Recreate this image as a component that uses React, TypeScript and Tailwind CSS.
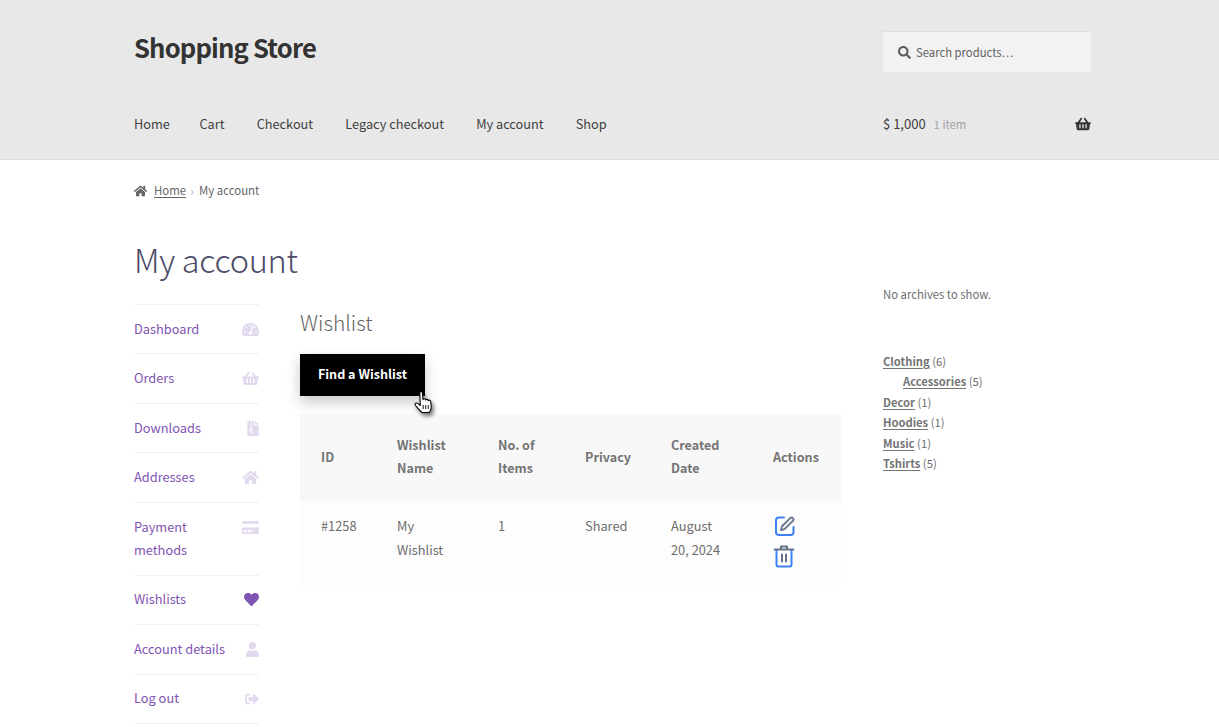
import React from "react";
import {
  FaTachometerAlt,
  FaShoppingBasket,
  FaFileArchive,
  FaHome,
  FaCreditCard,
  FaHeart,
  FaUser,
  FaSignOutAlt,
  FaSearch,
} from "react-icons/fa";

const font = { fontFamily: '"Noto Sans CJK SC", "Noto Sans", sans-serif' };

const navItems = ["Home", "Cart", "Checkout", "Legacy checkout", "My account", "Shop"];

const accountItems: { label: React.ReactNode; icon: React.ReactNode; active?: boolean }[] = [
  { label: "Dashboard", icon: <FaTachometerAlt className="w-[17px] h-[17px]" /> },
  { label: "Orders", icon: <FaShoppingBasket className="w-[17px] h-[17px]" /> },
  { label: "Downloads", icon: <FaFileArchive className="w-[12px] h-[15px]" /> },
  { label: "Addresses", icon: <FaHome className="w-[17px] h-[15px]" /> },
  { label: <>Payment<br />methods</>, icon: <FaCreditCard className="w-[17px] h-[15px]" /> },
  { label: "Wishlists", icon: <FaHeart className="w-[15px] h-[15px]" />, active: true },
  { label: "Account details", icon: <FaUser className="w-[13px] h-[15px]" /> },
  { label: "Log out", icon: <FaSignOutAlt className="w-[14px] h-[14px]" /> },
];

const cats: { name: string; n: number; child?: boolean }[] = [
  { name: "Clothing", n: 6 },
  { name: "Accessories", n: 5, child: true },
  { name: "Decor", n: 1 },
  { name: "Hoodies", n: 1 },
  { name: "Music", n: 1 },
  { name: "Tshirts", n: 5 },
];

function EditIcon() {
  return (
    <svg width="22" height="22" viewBox="0 0 22 22" fill="none" strokeLinecap="round" strokeLinejoin="round">
      <path d="M10 2.500H5A3 3 0 0 0 2 5.500V17a3 3 0 0 0 3 3h11.500a3 3 0 0 0 3-3v-5" stroke="#3b82f6" strokeWidth="2" />
      <path d="M7 15l.8-3.500L16.200 3.100a1.900 1.900 0 0 1 2.700 2.700L10.500 14.200z" stroke="#64748b" strokeWidth="1.800" />
    </svg>
  );
}

function TrashIcon() {
  return (
    <svg width="22" height="24" viewBox="0 0 22 24" fill="none" strokeLinecap="round" strokeLinejoin="round" className="-ml-px">
      <path d="M3.500 6v14.500A2 2 0 0 0 5.500 22.500h11a2 2 0 0 0 2-2V6" stroke="#3b82f6" strokeWidth="2" />
      <path d="M1.500 5.500h19M8 5V2.500h6V5" stroke="#64748b" strokeWidth="2" />
      <path d="M9 10.500v7M13 10.500v7" stroke="#64748b" strokeWidth="2" />
    </svg>
  );
}

function HandCursor() {
  return (
    <svg
      width="20"
      height="24"
      viewBox="0 0 20 24"
      className="absolute left-[414px] top-[390px] drop-shadow-[2px_3px_2px_rgba(0,0,0,0.55)]"
    >
      <path
        d="M5.800 2.500C5.800 1.200 8.300 1.200 8.400 2.500L9 9.500C9.500 8.400 11.500 8.500 11.600 9.900C12.100 9 14.100 9.100 14.200 10.600C14.800 9.800 16.600 10.100 16.700 11.600L17.200 17C17.200 19.500 16 21.500 15.300 22.500H8C6.500 21 2 16.500 1.200 15C.5 13.400 2.500 12.200 4 13.600L6.300 15.500z"
        fill="#fff"
        stroke="#000"
        strokeWidth="1.100"
        strokeLinejoin="round"
      />
      <path d="M9.200 15v4M11.700 15v4M14.200 15v4" stroke="#000" strokeWidth="0.900" />
    </svg>
  );
}

export default function App() {
  return (
    <div className="relative min-h-[727px] bg-white overflow-hidden text-[#6d6d6d]" style={font}>
      <header className="bg-[#e8e8e8] border-b border-[#dcdcdc] h-[160px]">
        <div className="w-[957px] ml-[134px]">
          <div className="flex justify-between h-[92px]">
            <div className="pt-[29px] text-[25.600px] leading-[36px] font-bold tracking-[-0.85px] text-[#333333]">
              Shopping Store
            </div>
            <div className="mt-[31px] w-[208px] h-[41px] bg-[#f2f2f2] border-t border-[#dedede] flex items-center pl-[15px] text-[11.300px] text-[#616161]">
              <FaSearch className="w-[13px] h-[13px] mr-[5px] text-[#5c5c5c]" />
              <span>Search products…</span>
            </div>
          </div>
          <div className="flex justify-between items-center h-[64px]">
            <nav className="flex gap-[32.100px] text-[12.750px] text-[#404040]">
              {navItems.map((n) => (
                <span key={n} className={n === "Home" ? "-mr-[2.500px]" : ""}>{n}</span>
              ))}
            </nav>
            <div className="flex items-center w-[208px] justify-between text-[13px] text-[#404040]">
              <span>
                $ 1,000<span className="ml-[8px] text-[11.300px] text-[#a3a3a3]">1 item</span>
              </span>
              <FaShoppingBasket className="w-[16px] h-[14px] text-[#333333]" />
            </div>
          </div>
        </div>
      </header>

      <main className="ml-[134px] w-[957px]">
        <div className="flex items-center h-[61px] text-[11.400px] text-[#666666]">
          <FaHome className="w-[15px] h-[12px] mr-[6px] -ml-px text-[#666666]" />
          <span className="underline underline-offset-2">Home</span>
          <span className="mx-[4px] w-[5px] leading-none text-[#bbbbbb] text-[13px]">›</span>
          <span>My account</span>
        </div>

        <div className="flex justify-between">
          <div className="w-[707px]">
            <h1 className="text-[32.500px] leading-[46px] mt-[15px] font-light text-[#4c4c68] tracking-[-0.3px]">My account</h1>
            <div className="flex mt-[22px]">
              <ul className="w-[125px] border-b border-[#f0f0f0] shrink-0 text-[12.800px] leading-[23.300px] text-[#7f54b3]">
                {accountItems.map((it, i) => (
                  <li
                    key={i}
                    className="flex justify-between items-start border-t border-[#f0f0f0] py-[12.600px]"
                  >
                    <span className="relative -top-[1px]">{it.label}</span>
                    <span
                      className={
                        "flex justify-end items-center h-[23px] " +
                        (it.active ? "text-[#7f54b3]" : "text-[#e2d9ef]")
                      }
                    >
                      {it.icon}
                    </span>
                  </li>
                ))}
              </ul>
              <div className="ml-[41px] w-[541px]">
                <h2 className="text-[21px] leading-[30px] font-light text-[#666666] mt-[3px]">Wishlist</h2>
                <div className="mt-[17px] inline-flex items-center justify-center pb-[2px] w-[125px] h-[42px] bg-black text-white text-[12.600px] font-bold shadow-[0_6px_14px_rgba(0,0,0,0.22)]">
                  Find a Wishlist
                </div>
                <table className="mt-[18px] w-[541px] table-fixed border-collapse text-[12.800px] leading-[24px]">
                  <colgroup>
                    <col className="w-[76px]" />
                    <col className="w-[101px]" />
                    <col className="w-[87px]" />
                    <col className="w-[86px]" />
                    <col className="w-[102px]" />
                    <col className="w-[89px]" />
                  </colgroup>
                  <thead>
                    <tr className="bg-[#f8f8f8] h-[87px] text-left text-[#747474] text-[12.600px] leading-[23px]">
                      <th className="pl-[21px] pb-[2px] font-bold">ID</th>
                      <th className="pl-[21px] pb-[4px] font-bold">Wishlist<br />Name</th>
                      <th className="pl-[21px] pb-[4px] font-bold">No. of<br />Items</th>
                      <th className="pl-[21px] pb-[2px] font-bold">Privacy</th>
                      <th className="pl-[21px] pb-[4px] font-bold">Created<br />Date</th>
                      <th className="pl-[21px] pb-[2px] font-bold">Actions</th>
                    </tr>
                  </thead>
                  <tbody>
                    <tr className="bg-[#fdfdfd] h-[86px] align-top">
                      <td className="pl-[21px] pt-[13px]">#1258</td>
                      <td className="pl-[21px] pt-[13px]">My<br />Wishlist</td>
                      <td className="pl-[21px] pt-[13px]">1</td>
                      <td className="pl-[21px] pt-[13px]">Shared</td>
                      <td className="pl-[21px] pt-[13px]">August<br />20, 2024</td>
                      <td className="pl-[22px] pt-[14px]">
                        <div className="flex flex-col gap-[7px]">
                          <EditIcon />
                          <TrashIcon />
                        </div>
                      </td>
                    </tr>
                  </tbody>
                </table>
              </div>
            </div>
          </div>
          <aside className="w-[208px] text-[11.300px] text-[#6d6d6d] pt-[63px]">
            <p className="leading-[21px]">No archives to show.</p>
            <ul className="mt-[46px] leading-[20.400px]">
              {cats.map((c) => (
                <li key={c.name} className={c.child ? "pl-[20px]" : ""}>
                  <span className="font-bold text-[11.200px] text-[#747474] underline underline-offset-2">{c.name}</span> ({c.n})
                </li>
              ))}
            </ul>
          </aside>
        </div>
      </main>
      <HandCursor />
    </div>
  );
}
